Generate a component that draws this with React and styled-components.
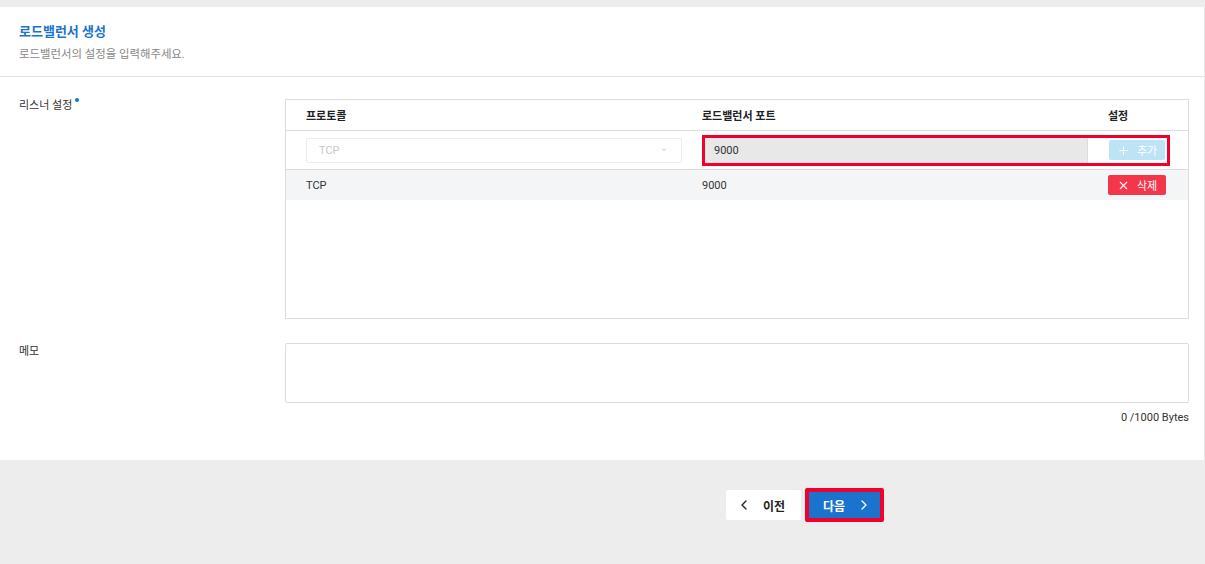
import styled, { createGlobalStyle } from "styled-components";
import { ChevronLeft, ChevronRight, Plus, X, ChevronDown } from "lucide-react";

const Global = createGlobalStyle`
  html, body {
    margin: 0;
    padding: 0;
    background: #ededed;
    font-family: Roboto, "Noto Sans CJK KR", sans-serif;
    color: #333;
  }
  * { box-sizing: border-box; }
`;

const Page = styled.div`
  width: 1205px;
  height: 564px;
  padding-top: 7px;
  display: flex;
  flex-direction: column;
`;

const Panel = styled.div`
  background: #fff;
  height: 453px;
  border-right: 1px solid #e8e8e8;
`;

const Head = styled.div`
  padding: 16px 19px 0;
  height: 70px;
  border-bottom: 1px solid #e0e0e0;
  h1 {
    margin: 0;
    font-size: 13px;
    font-weight: 700;
    color: #1a73cc;
    line-height: 18px;
  }
  p {
    margin: 5px 0 0;
    font-size: 11.4px;
    color: #888;
    line-height: 16px;
  }
`;

const Body = styled.div`
  padding: 22px 15px 0 19px;
  display: flex;
  flex-direction: column;
`;

const Row = styled.div`
  display: flex;
  margin-bottom: ${(p) => p.$gap || 0}px;
`;

const Label = styled.div`
  width: 266px;
  flex: none;
  font-size: 11px;
  color: #333;
  line-height: 14px;
  padding-top: ${(p) => p.$top || 0}px;
  span {
    position: relative;
  }
  span::after {
    content: "";
    position: absolute;
    right: -7px;
    top: -1px;
    width: 4px;
    height: 4px;
    border-radius: 50%;
    background: #1a73cc;
  }
`;

const Table = styled.div`
  width: 905px;
  height: 220px;
  border: 1px solid #dcdcdc;
`;

const Grid = styled.div`
  display: grid;
  grid-template-columns: 396px 406px 1fr;
  align-items: center;
  height: ${(p) => p.$h}px;
  background: ${(p) => p.$bg || "#fff"};
  border-bottom: ${(p) => (p.$line ? "1px solid #dcdcdc" : "none")};
  font-size: 11px;
`;

const Th = styled.div`
  padding-left: 20px;
  font-weight: 700;
  color: #222;
  font-size: 11px;
`;

const Td = styled.div`
  padding-left: 20px;
  color: #333;
`;

const SelectBox = styled.div`
  margin-left: 20px;
  height: 25px;
  border: 1px solid #ececec;
  border-radius: 2px;
  display: flex;
  align-items: center;
  justify-content: space-between;
  padding: 0 12px 0 12px;
  color: #c8c8c8;
  font-size: 11px;
`;

const Highlight = styled.div`
  grid-column: 2 / 4;
  margin-left: 20px;
  margin-right: 18px;
  border: 3px solid #f0002a;
  height: 31px;
  display: flex;
  align-items: center;
`;

const PortInput = styled.div`
  width: 383px;
  height: 25px;
  background: #e8e8e8;
  border-right: 1px solid #dcdcdc;
  display: flex;
  align-items: center;
  padding-left: 9px;
  font-size: 11px;
  color: #333;
`;

const SmallBtn = styled.div`
  margin-left: ${(p) => p.$ml || 0}px;
  width: ${(p) => p.$w}px;
  height: 20px;
  border-radius: 2px;
  background: ${(p) => p.$bg};
  color: #fff;
  display: flex;
  align-items: center;
  justify-content: center;
  gap: 7px;
  font-size: 11px;
`;

const Memo = styled.div`
  width: 905px;
  height: 60px;
  border: 1px solid #dcdcdc;
  border-radius: 2px;
`;

const Counter = styled.div`
  text-align: right;
  font-size: 11px;
  color: #333;
  padding-top: 8px;
`;

const Footer = styled.div`
  flex: 1;
  display: flex;
  align-items: flex-start;
  padding: 28px 0 0 726px;
  gap: 4px;
`;

const NavBtn = styled.div`
  height: ${(p) => (p.$primary ? 34 : 30)}px;
  width: ${(p) => (p.$primary ? 79 : 75)}px;
  margin-top: ${(p) => (p.$primary ? 0 : 2)}px;
  background: ${(p) => (p.$primary ? "#1a73cc" : "#fff")};
  border: ${(p) => (p.$primary ? "4px solid #f0002a" : "none")};
  border-radius: 2px;
  color: ${(p) => (p.$primary ? "#fff" : "#222")};
  font-weight: 700;
  font-size: 12px;
  display: flex;
  align-items: center;
  padding-left: ${(p) => (p.$primary ? 14 : 10)}px;
  gap: 11px;
`;

export default function App() {
  return (
    <Page>
      <Global />
      <Panel>
        <Head>
          <h1>로드밸런서 생성</h1>
          <p>로드밸런서의 설정을 입력해주세요.</p>
        </Head>
        <Body>
          <Row $gap={24}>
            <Label $top={0}>
              <span>리스너 설정</span>
            </Label>
            <Table>
              <Grid $h={31} $line>
                <Th>프로토콜</Th>
                <Th>로드밸런서 포트</Th>
                <Th>설정</Th>
              </Grid>
              <Grid $h={39} $line>
                <SelectBox>
                  TCP
                  <ChevronDown size={10} strokeWidth={0} fill="#ddd" />
                </SelectBox>
                <Highlight>
                  <PortInput>9000</PortInput>
                  <SmallBtn $ml={21} $w={56} $bg="#bde3f7">
                    <Plus size={13} strokeWidth={2} />
                    추가
                  </SmallBtn>
                </Highlight>
              </Grid>
              <Grid $h={30} $bg="#f4f5f7">
                <Td>TCP</Td>
                <Td>9000</Td>
                <Td>
                  <SmallBtn $w={58} $bg="#f3364a">
                    <X size={13} strokeWidth={2} />
                    삭제
                  </SmallBtn>
                </Td>
              </Grid>
            </Table>
          </Row>
          <Row>
            <Label $top={2}>메모</Label>
            <Memo />
          </Row>
          <Counter>0 /1000 Bytes</Counter>
        </Body>
      </Panel>
      <Footer>
        <NavBtn>
          <ChevronLeft size={16} strokeWidth={2} />
          이전
        </NavBtn>
        <NavBtn $primary>
          다음
          <ChevronRight size={16} strokeWidth={2} />
        </NavBtn>
      </Footer>
    </Page>
  );
}
